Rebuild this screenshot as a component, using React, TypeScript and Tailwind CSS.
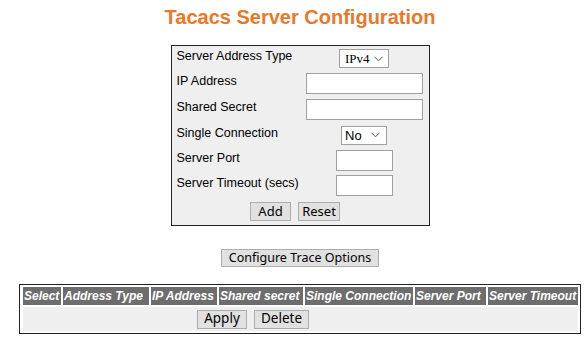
import React from "react";

function Btn({ w, h = 19, size = 13, children }: { w: number; h?: number; size?: number; children: React.ReactNode }) {
  return (
    <div
      style={{ width: w, height: h, fontSize: size }}
      className="flex items-center justify-center bg-[#e1e1e1] border border-[#adadad] text-black font-['Noto_Sans','Open_Sans',sans-serif] leading-none"
    >
      {children}
    </div>
  );
}

function Chevron() {
  return (
    <svg width="9" height="6" viewBox="0 0 9 6" className="shrink-0">
      <path d="M0.5 0.8 L4.5 4.8 L8.5 0.8" fill="none" stroke="#555" strokeWidth="1" />
    </svg>
  );
}

function Row({ h, label, children }: { h: number; label: string; children: React.ReactNode }) {
  return (
    <div style={{ height: h }} className="flex items-center">
      <div className="flex-1 pl-[5px] pb-[4px] text-[12.5px] leading-[15px] text-black whitespace-nowrap">{label}</div>
      <div className="w-[123px] flex justify-center items-center mr-[3px]">{children}</div>
    </div>
  );
}

function TextBox({ w }: { w: number }) {
  return <div style={{ width: w }} className="h-[21px] bg-white border border-[#a0a0a0]" />;
}

export default function App() {
  const headers: [string, number][] = [
    ["Select", 38],
    ["Address Type", 86],
    ["IP Address", 66],
    ["Shared secret", 84],
    ["Single Connection", 108],
    ["Server Port", 71],
    ["Server Timeout", 90],
  ];
  return (
    <div className="w-[588px] h-[341px] bg-white overflow-hidden font-['Liberation_Sans',Arial,sans-serif] pl-[12px]">
      <div className="flex flex-col items-center">
        <h1 className="pt-[5px] text-center text-[20px] font-bold text-[#e8792b] leading-[24px]">
          Tacacs Server Configuration
        </h1>
        <div className="mt-[16px] w-[259px] border border-[#222] bg-[#efefef] flex flex-col">
          <Row h={25} label="Server Address Type">
            <div className="w-[50px] h-[19px] bg-white border border-[#a0a0a0] flex items-center pl-[5px] pr-[5px] justify-between">
              <span className="font-['Liberation_Serif',serif] text-[13px] leading-none">IPv4</span>
              <Chevron />
            </div>
          </Row>
          <Row h={25} label="IP Address">
            <TextBox w={117} />
          </Row>
          <Row h={26} label="Shared Secret">
            <TextBox w={117} />
          </Row>
          <Row h={26} label="Single Connection">
            <div className="w-[46px] h-[19px] bg-white border border-[#a0a0a0] flex items-center pl-[3px] pr-[6px] justify-between">
              <span className="text-[13px] leading-none">No</span>
              <Chevron />
            </div>
          </Row>
          <Row h={24} label="Server Port">
            <TextBox w={57} />
          </Row>
          <Row h={26} label="Server Timeout (secs)">
            <TextBox w={57} />
          </Row>
          <div className="h-[27px] flex items-center justify-center gap-[7px] pr-[10px]">
            <Btn w={41}>Add</Btn>
            <Btn w={42}>Reset</Btn>
          </div>
        </div>
        <div className="mt-[23px]">
          <Btn w={158} h={18} size={12.5}>Configure Trace Options</Btn>
        </div>
        <div className="mt-[17px] w-[562px] border border-[#222] bg-white p-[2px] pl-[3px] flex flex-col gap-[2px]">
          <div className="flex gap-[2px] h-[18px]">
            {headers.map(([t, w], i) => (
              <div
                key={t}
                style={i === headers.length - 1 ? {} : { width: w }}
                className={`${i === headers.length - 1 ? "flex-1" : ""} bg-[#6d6d6d] text-white font-bold italic text-[12px] leading-[18px] whitespace-nowrap pl-[1px]`}
              >
                {t}
              </div>
            ))}
          </div>
          <div className="h-[24px] bg-[#efefef] flex items-center gap-[7px] pl-[174px]">
            <Btn w={50} size={13.5}>Apply</Btn>
            <Btn w={55} size={13.5}>Delete</Btn>
          </div>
        </div>
      </div>
    </div>
  );
}
